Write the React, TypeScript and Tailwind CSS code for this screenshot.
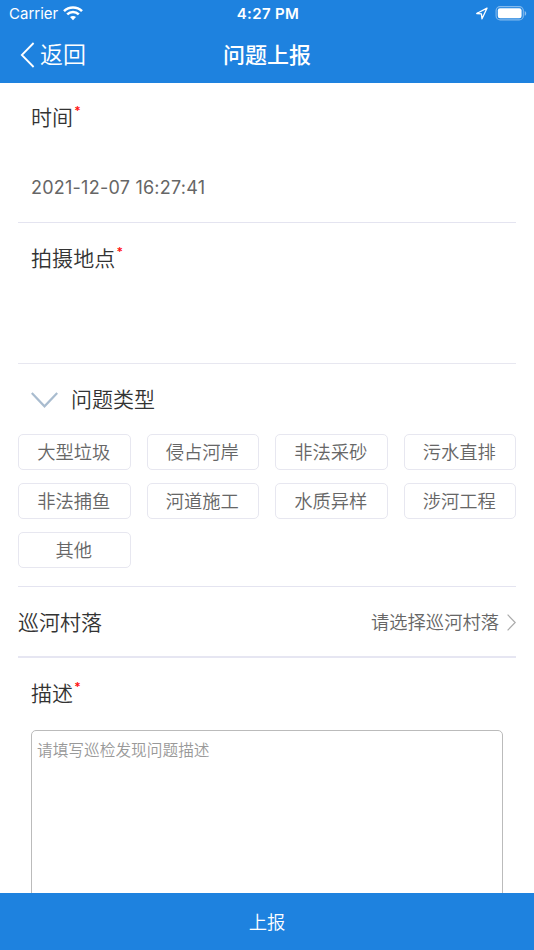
import React, { useState } from "react";

const problemTypes = [
	"大型垃圾",
	"侵占河岸",
	"非法采砂",
	"污水直排",
	"非法捕鱼",
	"河道施工",
	"水质异样",
	"涉河工程",
	"其他",
];

const StatusBar = () => (
	<div className="grid grid-cols-3 items-center h-7 pl-[9px] pr-[7px] text-[15px]">
		<div className="flex items-center gap-[5px]">
			<span className="font-normal">Carrier</span>
			<svg className="mb-0.5" width="20" height="15" viewBox="0 0 20 15" fill="none" stroke="currentColor" strokeWidth="2.6">
				<path d="M1 5.1C6 .2 14 .2 19 5.1" />
				<path d="M4.2 8.4c3.3-3.2 8.3-3.2 11.6 0" />
				<path d="M7 11.1c1.7-1.6 4.3-1.6 6 0L10 14.2z" fill="currentColor" stroke="none" />
			</svg>
		</div>
		<span className="font-semibold text-center whitespace-nowrap tracking-[0.35px]">4:27 PM</span>
		<div className="flex items-center justify-end gap-[7px] pb-px">
			<svg width="13" height="13" viewBox="0 0 13 13" fill="none" stroke="currentColor" strokeWidth="1.3" strokeLinejoin="round">
				<path d="M12 1.2L1.7 6.5l4.7.4.6 4.9z" />
			</svg>
			<svg width="32" height="15" viewBox="0 0 32 15" fill="none">
				<rect x="1.1" y=".6" width="27.2" height="13.3" rx="4" stroke="currentColor" strokeOpacity=".45" strokeWidth="1.1" />
				<rect x="2.8" y="2.3" width="23.8" height="9.9" rx="2.2" fill="currentColor" />
				<path d="M29.7 4.9c2 .8 2 4 0 4.8z" fill="currentColor" fillOpacity=".5" />
			</svg>
		</div>
	</div>
);

const Label = ({ text }: { text: string }) => (
	<div className="flex items-start text-[21px] leading-[30px] text-[#333]">
		<span className="tracking-[0.1px]">{text}</span>
		<span className="ml-px text-[12px] leading-4 font-semibold text-[#ff1010]">*</span>
	</div>
);

export default function App() {
	const [selected, setSelected] = useState("");
	const [desc, setDesc] = useState("");

	return (
		<div className="flex flex-col h-[950px] overflow-hidden bg-white font-['Inter','Noto_Sans_CJK_SC',sans-serif] font-[350]">
			<header className="h-[83px] shrink-0 bg-[#1e82df] text-white">
				<StatusBar />
				<div className="grid grid-cols-3 items-center h-[54px] px-5">
					<button className="flex items-center gap-[5px] text-[23px]">
						<svg width="15" height="26" viewBox="0 0 15 26" fill="none" stroke="currentColor" strokeWidth="1.8">
							<path d="M13.6 1L1.8 13l11.8 12" />
						</svg>
						<span>返回</span>
					</button>
					<h1 className="text-[22px] font-medium text-center whitespace-nowrap">问题上报</h1>
				</div>
			</header>

			<main className="flex-1 min-h-0 overflow-hidden px-[18px]">
				<section className="h-[140px] px-[13px] pt-5 border-b border-[#e4e4f0]">
					<Label text="时间" />
					<div className="mt-[41px] text-[18px] leading-7 tracking-[0.24px] font-normal text-[#666]">2021-12-07 16:27:41</div>
				</section>

				<section className="h-[141px] px-[13px] pt-[21px] border-b border-[#e7e7f0]">
					<Label text="拍摄地点" />
				</section>

				<section className="h-[223px] pt-5 border-b border-[#e4e4f0]">
					<div className="flex items-center h-[31px] gap-[13px] px-[13px]">
						<svg width="27" height="16" viewBox="0 0 27 16" fill="none" stroke="#a9bccf" strokeWidth="2.2">
							<path d="M.8 1l12.7 13.3L26.2 1" />
						</svg>
						<span className="text-[21px] leading-[30px] text-[#333]">问题类型</span>
					</div>
					<div className="grid grid-cols-4 gap-x-4 gap-y-[13px] mt-[19px]">
						{problemTypes.map((type) => (
							<button
								key={type}
								onClick={() => setSelected(type)}
								className={`h-9 pr-1.5 rounded-[5px] border text-[18.3px] leading-none whitespace-nowrap pl-[5px] ${
									selected === type
										? "border-[#1e82df] text-[#1e82df]"
										: "border-[#e7e7f0] text-[#666]"
								}`}
							>
								{type}
							</button>
						))}
					</div>
				</section>

				<section className="flex items-center justify-between h-[71px] pt-0.5 border-b-2 border-[#e6e6f2]">
					<span className="text-[21px] text-[#333]">巡河村落</span>
					<button className="flex items-center gap-2 text-[18.3px] text-[#666]">
						<span>请选择巡河村落</span>
						<svg width="9" height="17" viewBox="0 0 9 17" fill="none" stroke="#aaa" strokeWidth="1.2">
							<path d="M.6 .7L8.2 8.5.6 16.3" />
						</svg>
					</button>
				</section>

				<section className="px-[13px] pt-[21px]">
					<Label text="描述" />
					<textarea
						value={desc}
						onChange={(e) => setDesc(e.target.value)}
						placeholder="请填写巡检发现问题描述"
						className="block w-full h-[220px] mt-[21px] px-[5px] py-2 rounded-[5px] border border-[#bbb] text-[15.7px] leading-6 resize-none outline-none placeholder:text-[#999]"
					/>
				</section>
			</main>

			<button className="h-[57px] shrink-0 pt-0.5 bg-[#1e82df] text-white text-[18.3px]">上报</button>
		</div>
	);
}
